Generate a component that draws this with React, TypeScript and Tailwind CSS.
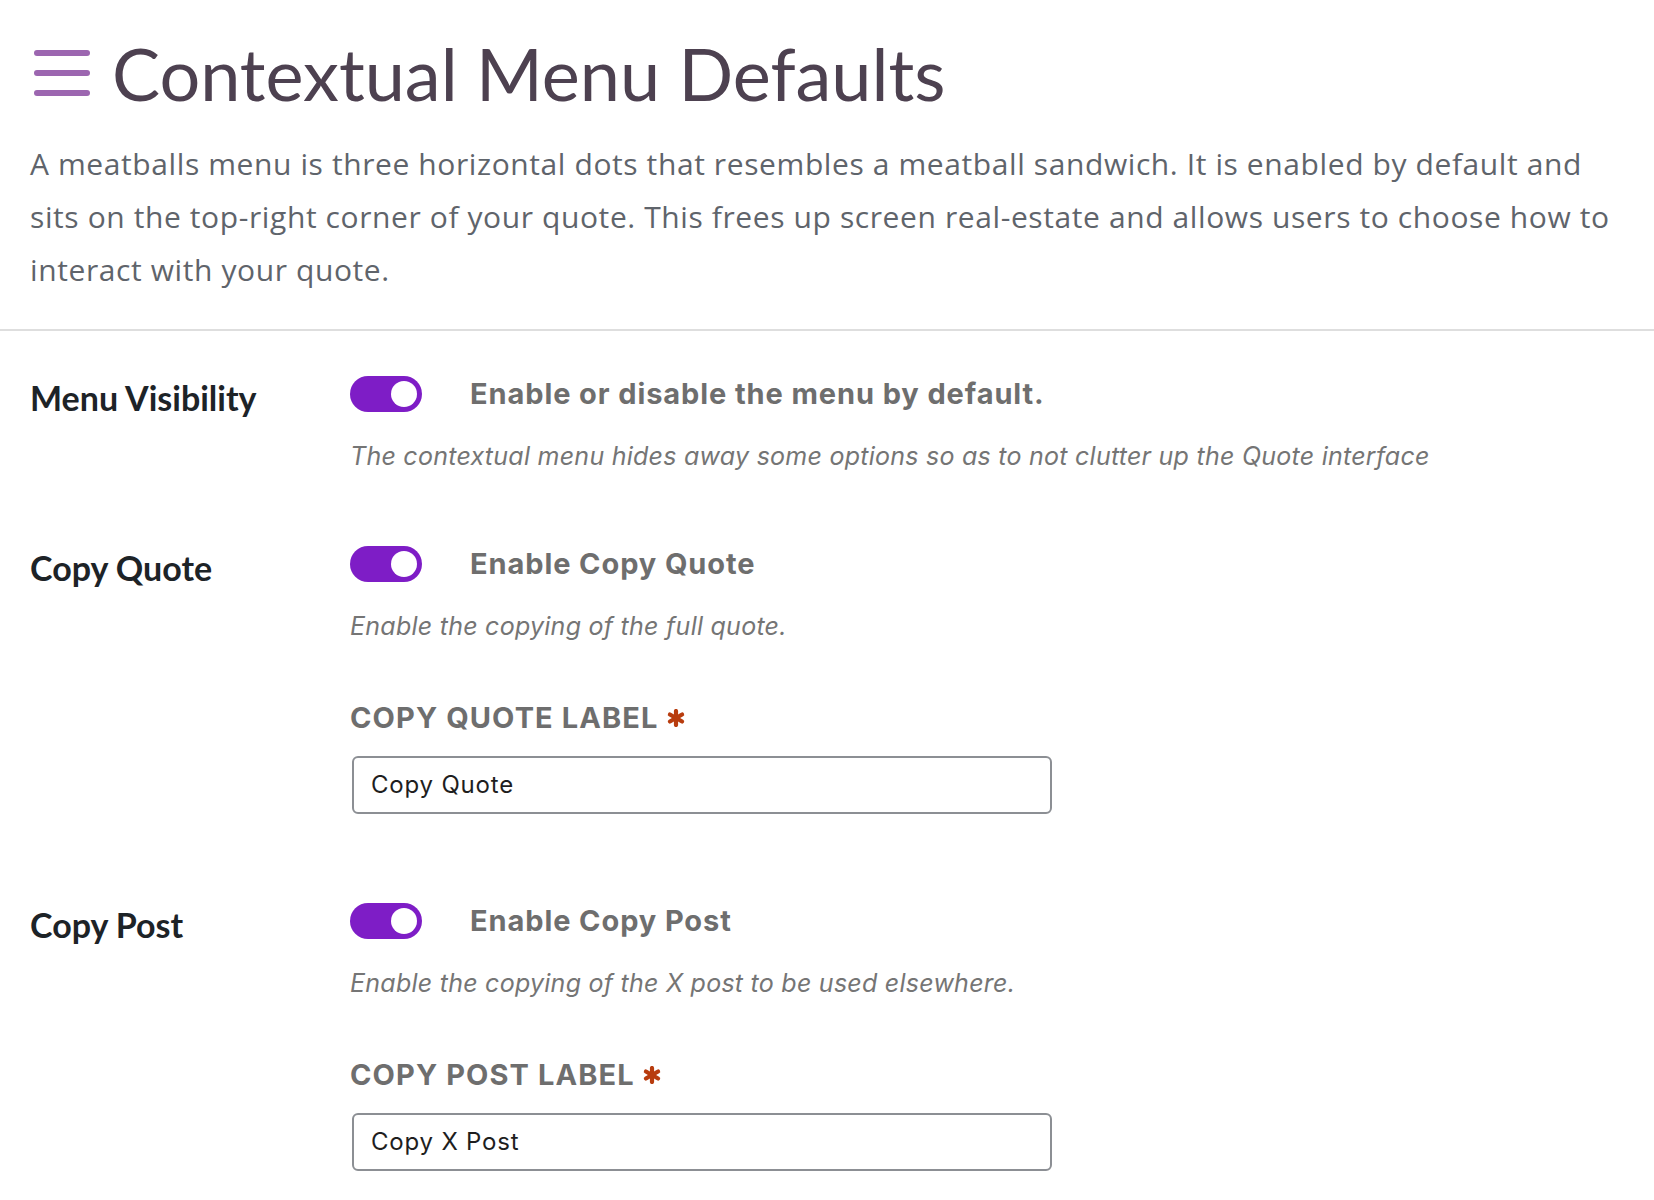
import React from "react";

function Hamburger() {
  return (
    <svg width="56" height="48" viewBox="0 0 56 48" className="shrink-0">
      <line x1="3" y1="4" x2="53" y2="4" stroke="#9c66b0" strokeWidth="6" strokeLinecap="round" />
      <line x1="3" y1="24" x2="53" y2="24" stroke="#9c66b0" strokeWidth="6" strokeLinecap="round" />
      <line x1="3" y1="44" x2="53" y2="44" stroke="#9c66b0" strokeWidth="6" strokeLinecap="round" />
    </svg>
  );
}

function Asterisk() {
  return (
    <svg width="18" height="18" viewBox="0 0 18 18" className="ml-[8px] mt-[9px] shrink-0 self-start">
      <g stroke="#b83c0e" strokeWidth="4.2" strokeLinecap="round">
        <line x1="9" y1="2" x2="9" y2="16" />
        <line x1="2.9" y1="5.5" x2="15.1" y2="12.5" />
        <line x1="2.9" y1="12.5" x2="15.1" y2="5.5" />
      </g>
    </svg>
  );
}

function Toggle() {
  return (
    <div className="relative h-[36px] w-[72px] shrink-0 rounded-full bg-[#7e1dc6]">
      <div className="absolute right-[5px] top-[5px] h-[26px] w-[26px] rounded-full bg-white" />
    </div>
  );
}

const interFont = "font-['Inter',sans-serif]";

function Row({
  label,
  toggleText,
  desc,
  fieldLabel,
  value,
  className,
}: {
  label: string;
  toggleText: string;
  desc: string;
  fieldLabel?: string;
  value?: string;
  className?: string;
}) {
  return (
    <div className={"grid grid-cols-[320px_1fr] " + (className ?? "")}>
      <div className="pt-[4px] font-['Lato',sans-serif] text-[34px] font-bold leading-[36px] text-[#1d2327]">
        {label}
      </div>
      <div className="flex flex-col">
        <div className="flex items-center gap-[48px]">
          <Toggle />
          <span className={interFont + " text-[29px] font-bold leading-[36px] tracking-[0.9px] text-[#6e6e6e]"}>
            {toggleText}
          </span>
        </div>
        <p className={interFont + " mt-[28px] text-[25px] italic leading-[32px] tracking-[0.25px] text-[#757575]"}>
          {desc}
        </p>
        {fieldLabel && (
          <>
            <div className="mt-[58px] flex items-start">
              <span className={interFont + " text-[29px] font-bold leading-[36px] tracking-[1.1px] text-[#6e6e6e]"}>
                {fieldLabel}
              </span>
              <Asterisk />
            </div>
            <div className="ml-[2px] mt-[20px] flex h-[58px] w-[700px] items-center rounded-[6px] border-2 border-[#8c8f94] bg-white px-[17px]">
              <span className={interFont + " text-[24px] leading-[30px] tracking-[0.8px] text-[#1e1e1e]"}>{value}</span>
            </div>
          </>
        )}
      </div>
    </div>
  );
}

export default function App() {
  return (
    <div className="min-h-[1200px] w-[1654px] overflow-hidden bg-white">
      <div className="px-[30px] pt-[29px]">
        <h1 className="flex items-center gap-[22px] pl-[4px]">
          <Hamburger />
          <span className="font-['Lato',sans-serif] text-[72px] font-normal leading-[88px] text-[#4d4150]">
            Contextual Menu Defaults
          </span>
        </h1>
        <p className="mt-[20px] whitespace-nowrap pb-[33px] font-['Open_Sans',sans-serif] text-[30px] leading-[53px] tracking-[0.6px] text-[#5f646b]">
          A meatballs menu is three horizontal dots that resembles a meatball sandwich. It is enabled by default and
          <br />
          sits on the top-right corner of your quote. This frees up screen real-estate and allows users to choose how to
          <br />
          interact with your quote.
        </p>
      </div>
      <div className="h-[2px] w-full bg-[#dedede]" />
      <div className="px-[30px] pt-[45px]">
        <Row
          label="Menu Visibility"
          toggleText="Enable or disable the menu by default."
          desc="The contextual menu hides away some options so as to not clutter up the Quote interface"
        />
        <Row
          className="mt-[74px]"
          label="Copy Quote"
          toggleText="Enable Copy Quote"
          desc="Enable the copying of the full quote."
          fieldLabel="COPY QUOTE LABEL"
          value="Copy Quote"
        />
        <Row
          className="mt-[89px]"
          label="Copy Post"
          toggleText="Enable Copy Post"
          desc="Enable the copying of the X post to be used elsewhere."
          fieldLabel="COPY POST LABEL"
          value="Copy X Post"
        />
      </div>
    </div>
  );
}
